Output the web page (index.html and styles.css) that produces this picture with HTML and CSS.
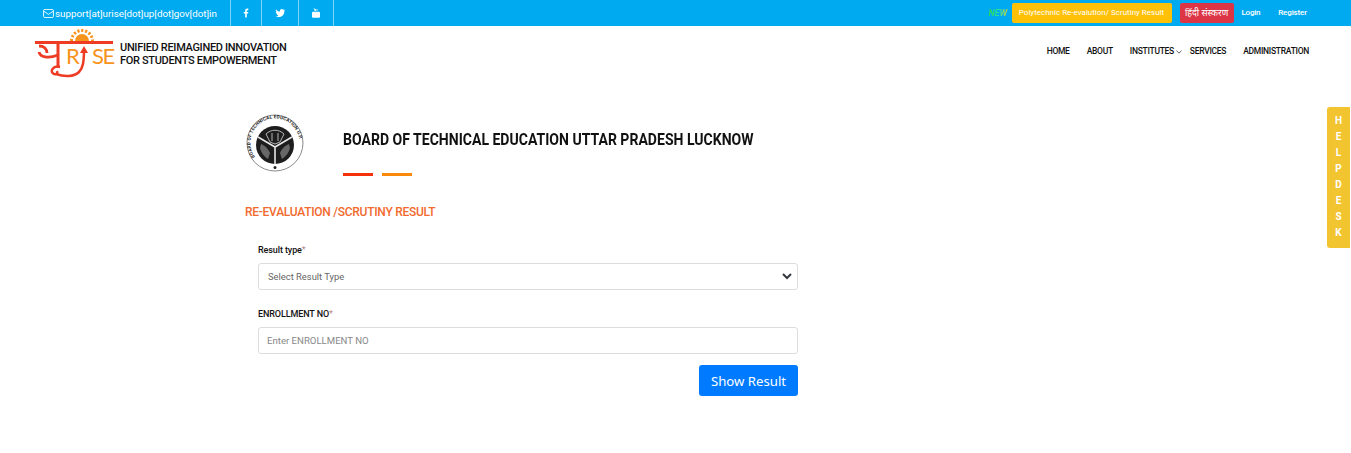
FILE: index.html
```html
<!DOCTYPE html>
<html>
  <head>
    <meta charset="utf-8">
    <title>Re-evaluation / Scrutiny Result</title>
    <link rel="stylesheet" href="styles.css">
  </head>
  <body>
    <div class="topbar">
      <div class="top-left">
        <span class="mail">
          <svg class="mail-icon" viewBox="0 0 12 10" width="11" height="9"><rect x="0.5" y="0.5" width="11" height="9" rx="1.5" fill="none" stroke="#fff"/><path d="M0.8 2.5 L6 6 L11.2 2.5" fill="none" stroke="#fff"/></svg>
          <span>support[at]urise[dot]up[dot]gov[dot]in</span>
        </span>
        <ul class="social">
          <li class="soc-fb">
            <svg viewBox="0 0 8 12" width="6" height="10"><path d="M5 12V6.800h1.800L7 4.600H5V3.300c0-.6.2-1 1-1h1.100V.3C6.900.2 6.300.1 5.600.1 4 .1 2.900 1.100 2.900 2.900v1.700H1v2.200h1.900V12z" fill="#fff"/></svg>
          </li>
          <li class="soc-tw">
            <svg viewBox="0 0 12 10" width="10" height="8"><path d="M12 1.200c-.4.2-.9.300-1.400.4.500-.3.900-.8 1.100-1.400-.5.300-1 .5-1.600.6C9.600.300 9 0 8.300 0 7 0 5.900 1.100 5.900 2.500c0 .2 0 .4.100.6C4 3 2.200 2 1 .5.800.9.700 1.300.700 1.700c0 .9.400 1.600 1.100 2.100-.4 0-.8-.1-1.100-.3 0 1.200.8 2.200 2 2.500-.4.100-.8.100-1.100 0 .3 1 1.200 1.700 2.300 1.700C3.900 8.500 2.300 9 .7 8.800 1.800 9.600 3.100 10 4.500 10c4.600 0 7.100-3.800 6.900-7.200.1-.5.400-1 .6-1.600z" fill="#fff"/></svg>
          </li>
          <li class="soc-yt">
            <svg viewBox="0 0 10 12" width="8" height="10"><path d="M2 0l.7 2v1.300h.6V2L4 0h-.6l-.4 1.300L2.600 0zM4.300 1c-.4 0-.7.300-.7.700v1c0 .4.300.7.700.7s.7-.3.700-.7v-1c0-.4-.3-.7-.7-.7zM5.500 1v2c0 .5.600.5 1 0v.3H7V1h-.5v1.900c-.2.200-.5.200-.5 0V1z" fill="#fff"/><rect x="0" y="4.500" width="10" height="7.500" rx="1.500" fill="#fff"/></svg>
          </li>
        </ul>
      </div>
      <div class="top-right">
        <span class="new-tag">NEW</span>
        <a class="btn-top btn-yellow">Polytechnic Re-evalution/ Scrutiny Result</a>
        <a class="btn-top btn-red">हिंदी संस्करण</a>
        <a class="top-link">Login</a>
        <a class="top-link link-register">Register</a>
      </div>
    </div>

    <header class="navbar">
      <div class="brand">
        <div class="logo">
          <svg viewBox="0 0 80 54" width="80" height="54">
            <path d="M40 15a7 7 0 0 1 14 0z" fill="#f7941d"/>
            <path d="M36.500 15a10.500 10.500 0 0 1 21 0" fill="none" stroke="#f7941d" stroke-width="3" stroke-dasharray="2.200 1.700"/>
            <rect x="0" y="15" width="78" height="3" fill="#ee3b24"/>
            <path d="M23 18v24" fill="none" stroke="#ee3b24" stroke-width="3"/>
            <path d="M4 20c5 0 8 3 8 7M4 26c1 5 9 7 19 3" fill="none" stroke="#ee3b24" stroke-width="2.800"/>
            <path d="M25 41c-7-2-11 5-6 7 2 1 4-1 3-3M21 48c8 3 18 3 23-2 4-4 5-10 5-23" fill="none" stroke="#ee3b24" stroke-width="2.500"/>
            <path d="M45 27l4-7 4 7z" fill="#ee3b24"/>
            <text class="logo-letters" x="31" y="38">R</text>
            <text class="logo-letters logo-se" x="57" y="38">SE</text>
          </svg>
        </div>
        <div class="brand-text">UNIFIED REIMAGINED INNOVATION<br>FOR STUDENTS EMPOWERMENT</div>
      </div>
      <nav class="menu">
        <a>HOME</a>
        <a>ABOUT</a>
        <a class="has-drop">INSTITUTES
          <svg viewBox="0 0 8 5" width="6" height="4"><path d="M.5.500 4 4 7.500.500" fill="none" stroke="#333"/></svg>
        </a>
        <a>SERVICES</a>
        <a>ADMINISTRATION</a>
      </nav>
    </header>

    <main class="content">
      <div class="board">
        <svg class="emblem" viewBox="0 0 60 60" width="60" height="60">
          <defs><path id="ring" d="M10 44A24.500 24.500 0 1 1 50 44"/></defs>
          <circle cx="30" cy="30" r="28" fill="#fff" stroke="#8a8a8a" stroke-width="1"/>
          <text class="ring-text"><textPath href="#ring">BOARD OF TECHNICAL EDUCATION U.P.</textPath></text>
          <circle cx="30" cy="32" r="19" fill="#1d1d1d"/>
          <path d="M30 34L13 24M30 34L47 24M30 34V51" stroke="#e6e6e6" stroke-width="1.600"/>
          <path d="M21 21c5-5 13-5 18 0l-4 8-5 2-5-2zM27 20v8M33 20v8" fill="none" stroke="#ddd" stroke-width=".8"/>
          <path d="M16 31c3 1 7 4 9 9l-2 6c-3-2-7-6-8-11zM44 31c-3 1-7 4-9 9l2 6c3-2 7-6 8-11z" fill="#999" opacity=".6"/>
          <circle cx="30" cy="54.500" r="1.500" fill="#222"/>
        </svg>
        <div class="board-title">
          <h1><span>BOARD OF TECHNICAL EDUCATION UTTAR PRADESH LUCKNOW</span></h1>
          <div class="dashes"><span class="dash-red"></span><span class="dash-orange"></span></div>
        </div>
      </div>

      <h2 class="section-title">RE-EVALUATION /SCRUTINY RESULT</h2>

      <form class="result-form">
        <div class="field">
          <label>Result type<span class="req">*</span></label>
          <div class="select-box">
            Select Result Type
            <svg viewBox="0 0 10 7" width="10" height="7"><path d="M1 1l4 4 4-4" fill="none" stroke="#343a40" stroke-width="2"/></svg>
          </div>
        </div>
        <div class="field">
          <label>ENROLLMENT NO<span class="req">*</span></label>
          <input class="text-input" type="text" placeholder="Enter ENROLLMENT NO">
        </div>
        <div class="actions">
          <button class="btn-show" type="button">Show Result</button>
        </div>
      </form>
    </main>

    <a class="helpdesk">
      <span>H</span><span>E</span><span>L</span><span>P</span><span>D</span><span>E</span><span>S</span><span>K</span>
    </a>
  </body>
</html>
```

FILE: styles.css
```css
* {
  box-sizing: border-box;
}

body {
  margin: 0;
  font-family: Roboto, Arial, sans-serif;
  background-color: #fff;
  height: 453px;
  overflow: hidden;
}

/* barra azul */
.topbar {
  display: flex;
  justify-content: space-between;
  height: 26px;
  background-color: #00aaf0;
  color: #fff;
  padding: 0 44px 0 43px;
}

.top-left {
  display: flex;
  align-items: center;
}

.mail {
  display: flex;
  align-items: center;
  gap: 1px;
  font-size: 9.800px;
  width: 187px;
  white-space: nowrap;
}

.social {
  display: flex;
  list-style: none;
  margin: 0;
  padding: 0;
  height: 26px;
  border-left: 1px solid #7fd3f6;
}

.social li {
  display: flex;
  align-items: center;
  justify-content: center;
  border-right: 1px solid #7fd3f6;
}

.soc-fb {
  width: 31px;
}

.soc-tw {
  width: 37px;
}

.soc-yt {
  width: 35px;
}

.top-right {
  display: flex;
  align-items: center;
  font-size: 8px;
  padding-bottom: 1px;
}

.new-tag {
  width: 19px;
  margin-right: 4px;
  font-size: 9px;
  font-weight: bold;
  font-style: italic;
  background: linear-gradient(90deg, #2ed84a, #26e0a0 50%, #d6d03a);
  -webkit-background-clip: text;
  background-clip: text;
  color: transparent;
}

.btn-top {
  display: block;
  height: 20px;
  line-height: 20px;
  border-radius: 2px;
  text-align: center;
}

.btn-yellow {
  width: 160px;
  background-color: #ffc107;
  margin-right: 8px;
}

.btn-red {
  width: 54px;
  background-color: #dc3545;
  margin-right: 8px;
  font-size: 9px;
  font-family: "Noto Sans", sans-serif;
}

.top-link {
  font-size: 8px;
  font-weight: 500;
  letter-spacing: -.25px;
}

.link-register {
  margin-left: 18px;
  letter-spacing: -.12px;
}

/* menu */
.navbar {
  display: flex;
  justify-content: space-between;
  align-items: flex-start;
  padding: 0 42px 0 35px;
  height: 60px;
}

.brand {
  display: flex;
}

.logo {
  height: 54px;
}

.logo-letters {
  font-family: Lato, sans-serif;
  font-size: 22px;
  fill: #f7941d;
}

.logo-se {
  letter-spacing: -1.500px;
}

.ring-text {
  font-family: Roboto, sans-serif;
  font-size: 4.700px;
  font-weight: 700;
  fill: #222;
  letter-spacing: .1px;
}

.brand-text {
  font-size: 11px;
  font-weight: 500;
  line-height: 13px;
  color: #111;
  margin: 15px 0 0 5px;
  letter-spacing: -.32px;
}

.menu {
  display: flex;
  gap: 17px;
  margin-top: 20px;
  font-size: 8.500px;
  font-weight: 500;
  letter-spacing: -.28px;
  color: #111;
}

.has-drop {
  margin-right: -9px;
}

/* conteudo */
.content {
  width: 553px;
  margin-left: 245px;
  padding-top: 26px;
}

.board {
  display: flex;
}

.emblem {
  flex-shrink: 0;
  margin-top: 1px;
}

.board-title {
  margin-left: 38px;
}

h1 {
  font-size: 16.500px;
  font-weight: 700;
  line-height: 20px;
  margin: 18px 0 23px;
  color: #111;
  white-space: nowrap;
}

h1 span {
  display: inline-block;
  transform: scaleX(.851);
  transform-origin: left center;
}

.dashes {
  display: flex;
  gap: 9px;
}

.dashes span {
  width: 30px;
  height: 3px;
}

.dash-red {
  background-color: #f4310b;
}

.dash-orange {
  background-color: #f98a0c;
}

.section-title {
  font-size: 12px;
  font-weight: 500;
  letter-spacing: -.27px;
  color: #f26a2e;
  margin: 28px 0 0;
  line-height: 16px;
}

.result-form {
  padding-left: 13px;
  margin-top: 24px;
}

.field {
  margin-bottom: 18px;
}

.field label {
  display: block;
  font-size: 9px;
  font-weight: 500;
  letter-spacing: -.1px;
  line-height: 12px;
  margin-bottom: 7px;
  color: #111;
}

.req {
  color: #b98a8a;
  font-weight: 400;
}

.select-box {
  display: flex;
  justify-content: space-between;
  align-items: center;
  height: 27px;
  border: 1px solid #ddd;
  border-radius: 3px;
  padding: 0 5px 0 9px;
  font-size: 9.400px;
  color: #666;
}

.text-input {
  display: block;
  width: 100%;
  height: 27px;
  border: 1px solid #ddd;
  border-radius: 3px;
  padding: 0 8px;
  font-family: Roboto, Arial, sans-serif;
  font-size: 9.600px;
}

.text-input::placeholder {
  color: #888;
}

.actions {
  display: flex;
  justify-content: flex-end;
  margin-top: -7px;
}

.btn-show {
  width: 99px;
  height: 31px;
  background-color: #007bff;
  color: #fff;
  border: none;
  border-radius: 3px;
  font-family: "Noto Sans", sans-serif;
  font-size: 13.200px;
}

/* helpdesk */
.helpdesk {
  position: fixed;
  right: 1px;
  top: 107px;
  width: 23px;
  height: 141px;
  display: flex;
  flex-direction: column;
  align-items: center;
  justify-content: space-between;
  padding: 8px 0 10px;
  background-color: #f2c42f;
  border-radius: 3px 0 0 3px;
  color: #fff;
  font-size: 10px;
  font-weight: 700;
  line-height: 11px;
}
```
